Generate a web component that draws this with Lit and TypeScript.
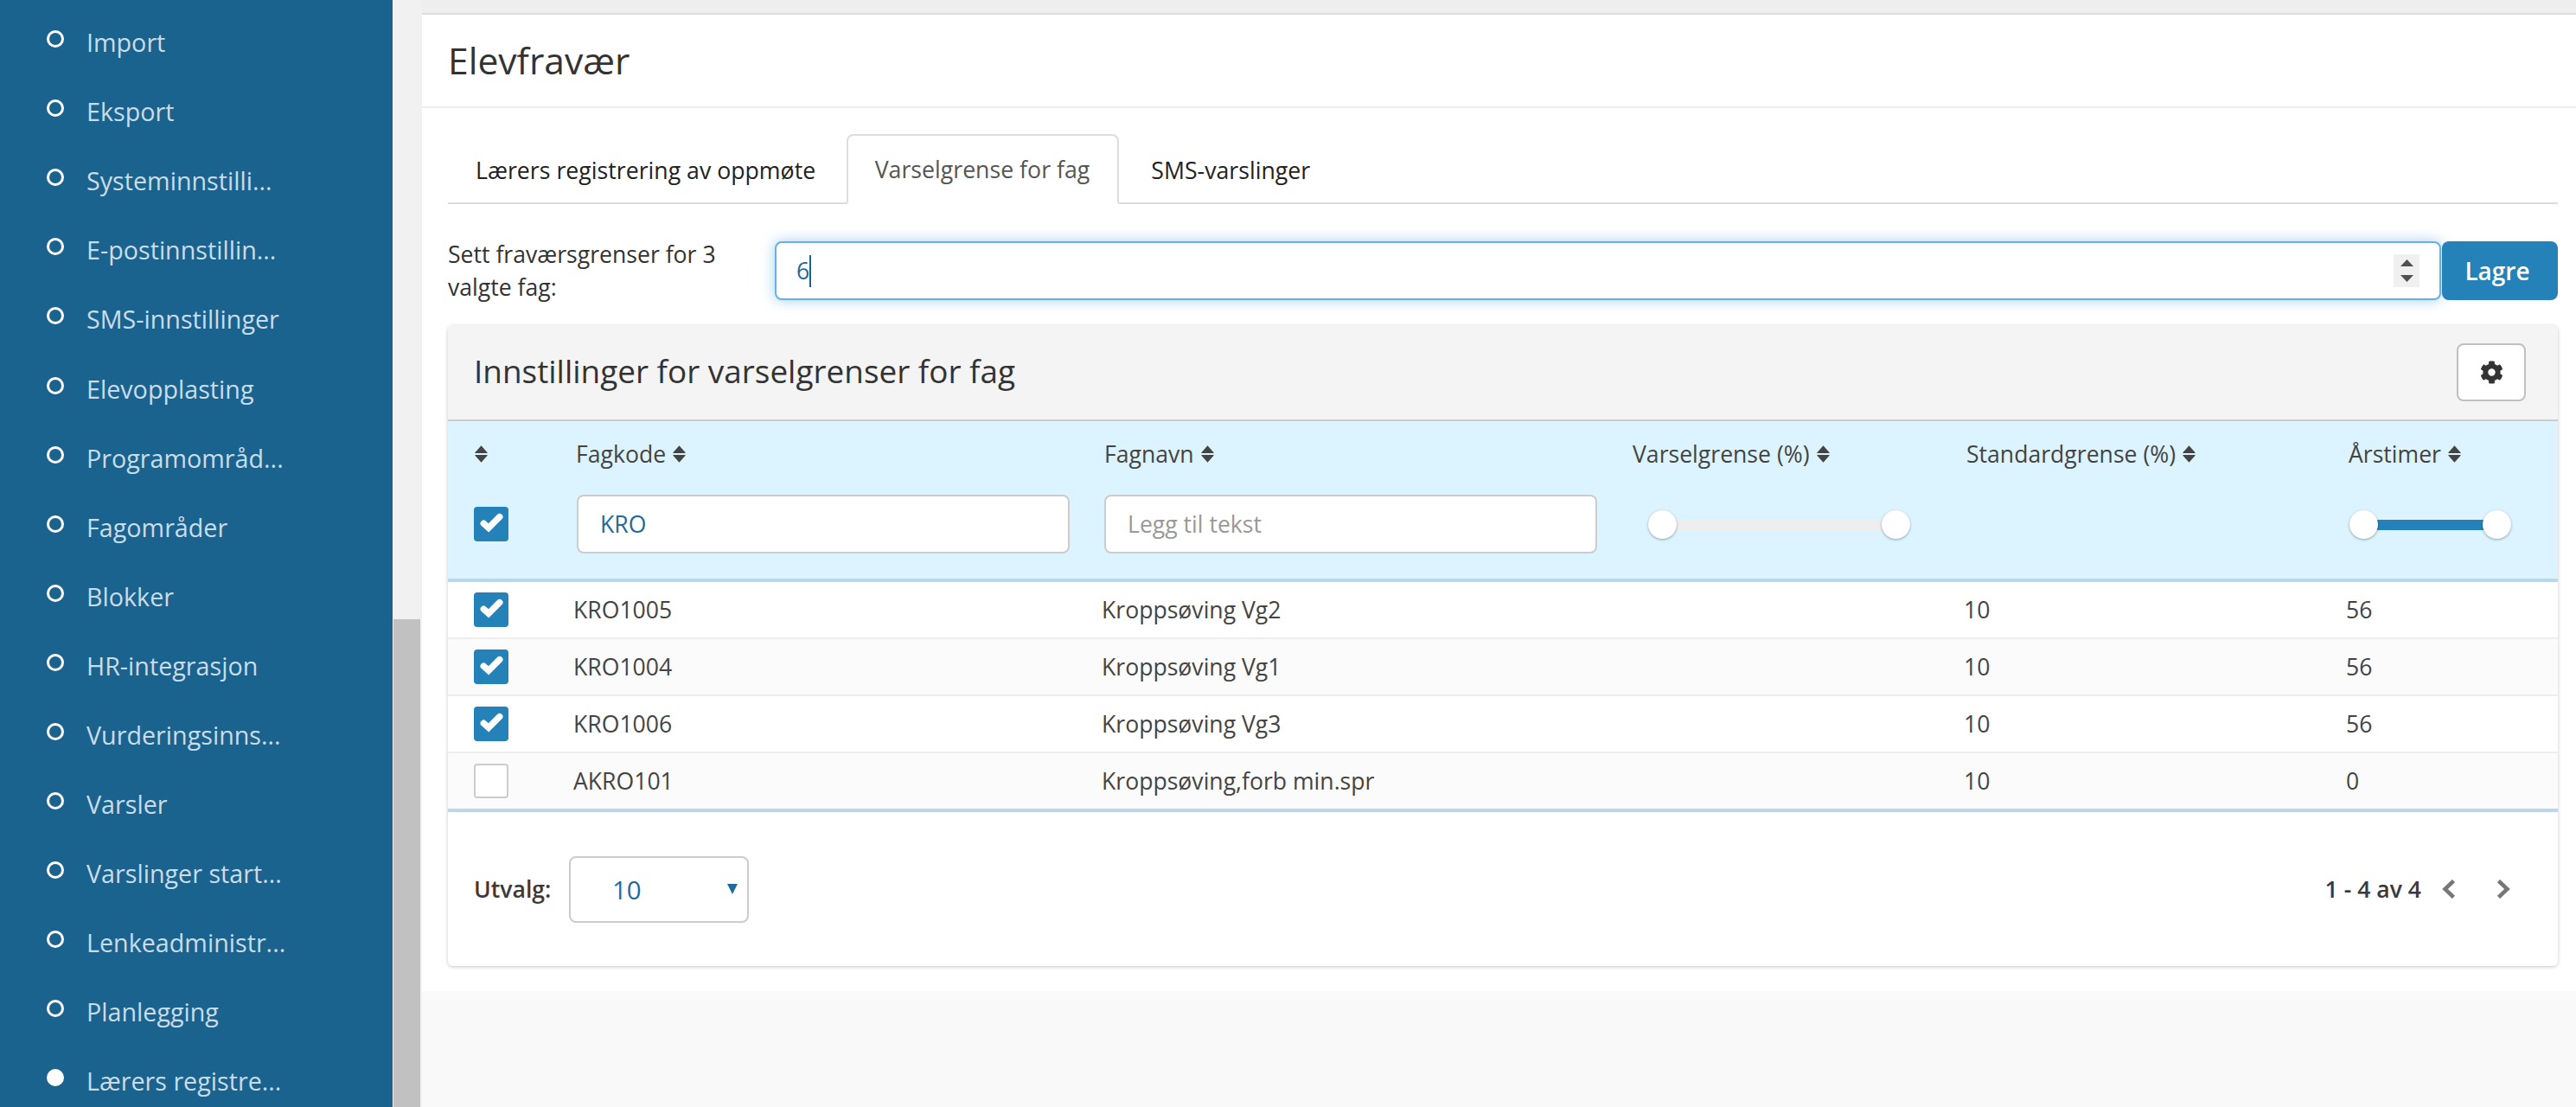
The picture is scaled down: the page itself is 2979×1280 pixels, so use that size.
import { LitElement, html, css, svg } from "lit";
import { customElement } from "lit/decorators.js";

const MENU = ["Import","Eksport","Systeminnstilli...","E-postinnstillin...","SMS-innstillinger","Elevopplasting","Programområd...","Fagområder","Blokker","HR-integrasjon","Vurderingsinns...","Varsler","Varslinger start...","Lenkeadministr...","Planlegging","Lærers registre..."];
const ROWS = [
  { c: true, code: "KRO1005", name: "Kroppsøving Vg2", std: "10", h: "56" },
  { c: true, code: "KRO1004", name: "Kroppsøving Vg1", std: "10", h: "56" },
  { c: true, code: "KRO1006", name: "Kroppsøving Vg3", std: "10", h: "56" },
  { c: false, code: "AKRO101", name: "Kroppsøving,forb min.spr", std: "10", h: "0" },
];

const sortIcon = html`<svg class="sort" viewBox="0 0 15 20"><path d="M7.5 0.3 14.6 8.2a.5.5 0 0 1-.4.8H.8a.5.5 0 0 1-.4-.8zM7.5 19.7.4 11.8a.5.5 0 0 1 .4-.8h13.4a.5.5 0 0 1 .4.8z"/></svg>`;
const checkbox = (on: boolean) => html`<span class="cb ${on ? "on" : ""}">${on ? html`<svg viewBox="0 0 40 40"><path d="M11.3 19.3 17 24.3 29.7 11.7"/></svg>` : ""}</span>`;
const gear = svg`<path d="M487.4 315.7l-42.6-24.6c4.3-23.2 4.3-47 0-70.2l42.6-24.6c4.9-2.8 7.1-8.6 5.5-14-11.1-35.6-30-67.8-54.7-94.6-3.8-4.1-10-5.1-14.8-2.3L380.8 110c-17.9-15.4-38.5-27.3-60.8-35.1V25.8c0-5.6-3.9-10.5-9.4-11.7-36.7-8.2-74.3-7.8-109.2 0-5.5 1.2-9.4 6.1-9.4 11.7V75c-22.2 7.9-42.8 19.8-60.8 35.1L88.7 85.5c-4.9-2.8-11-1.9-14.8 2.3-24.7 26.7-43.6 58.9-54.7 94.6-1.7 5.4.6 11.2 5.5 14L67.3 221c-4.3 23.2-4.3 47 0 70.2l-42.6 24.6c-4.9 2.8-7.1 8.6-5.5 14 11.1 35.6 30 67.8 54.7 94.6 3.8 4.1 10 5.1 14.8 2.3l42.6-24.6c17.9 15.4 38.5 27.3 60.8 35.1v49.2c0 5.6 3.9 10.5 9.4 11.7 36.7 8.2 74.3 7.8 109.2 0 5.5-1.2 9.4-6.1 9.4-11.7v-49.2c22.2-7.9 42.8-19.8 60.8-35.1l42.6 24.6c4.9 2.8 11 1.9 14.8-2.3 24.7-26.7 43.6-58.9 54.7-94.6 1.5-5.5-.7-11.3-5.6-14.1zM256 336c-44.1 0-80-35.9-80-80s35.9-80 80-80 80 35.9 80 80-35.9 80-80 80z"/>`;

@customElement("app-root")
export class AppRoot extends LitElement {
  static styles = css`
    :host { display: block; width: 2979px; height: 1280px; overflow: hidden; font-family: "Open Sans", sans-serif; font-size: 26.6px; line-height: 38px; color: #333; background: #f9f9f9; }
    * { box-sizing: border-box; }
    .page { display: grid; grid-template-columns: 454px 34px 1fr; height: 1280px; }

    .side { background: #1b638f; padding-top: 9px; overflow: hidden; }
    .side ul { list-style: none; margin: 0; padding: 0; }
    .side li { height: 80.1px; display: flex; align-items: center; padding-left: 54px; color: #c9dde9; white-space: nowrap; font-size: 28.7px; }
    .dot { width: 20px; height: 20px; border: 3px solid #fff; border-radius: 50%; margin-right: 26px; position: relative; top: -4px; flex: none; }
    .dot.on { background: #fff; }

    .bar { background: #f1f1f1; padding: 716px 2px 0 1px; display: flex; }
    .thumb { flex: 1; background: #c1c1c1; }

    .main { display: flex; flex-direction: column; }
    .top { height: 17px; background: #eee; border-bottom: 2px solid #ddd; }
    .sheet { background: #fff; height: 1129px; }
    .title { height: 108px; border-bottom: 2px solid #eee; padding: 0 30px 3px; display: flex; align-items: center; font-size: 42.6px; color: #333; }
    .body { padding: 30px 21px 0 30px; }

    .tabs { display: flex; height: 81px; border-bottom: 2px solid #ddd; font-size: 26.7px; }
    .tab { padding: 0 32px; height: 81px; display: flex; align-items: center; color: #222; border: 2px solid transparent; border-bottom: 0; border-radius: 8px 8px 0 0; white-space: nowrap; }
    .tab.first { padding-left: 30px; padding-right: 34px; }
    .tab.active { color: #555; background: #fff; border-color: #ddd; border-bottom: 2px solid #fff; margin-right: 3px; padding-left: 30.5px; }

    .limit { display: flex; align-items: center; margin-top: 43px; height: 68px; }
    .limit label { width: 378px; flex: none; }
    .num { flex: 1; height: 68px; background: #fff; border: 2px solid #66afe9; border-radius: 8px; box-shadow: 0 0 16px rgba(102,175,233,.6); display: flex; align-items: center; padding: 0 23px 0 23px; color: #1f6a9c; margin-right: 1px; }
    .caret { width: 2px; height: 37px; background: #1b638f; }
    .grow { flex: 1; }
    .spin { width: 30px; height: 38px; background: #f0f0f0; display: flex; flex-direction: column; align-items: center; justify-content: center; gap: 10px; }
    .spin svg { width: 15px; height: 8px; fill: #505050; display: block; }
    .save { width: 134px; height: 68px; background: #2582b8; color: #fff; font-weight: 600; font-size: 28px; border: 0; border-radius: 8px; font-family: inherit; padding: 0 6px 0 0; }

    .panel { margin-top: 29px; height: 741px; border-radius: 6px; background: #fff; box-shadow: 0 1px 4px rgba(0,0,0,.22); overflow: hidden; }
    .phead { height: 111px; background: #f4f4f4; border-bottom: 2px solid #ccc; display: flex; align-items: center; justify-content: space-between; padding: 0 37px 0 30px; font-size: 36.9px; }
    .phead > span:first-child { margin-top: -3px; }
    .gearbtn { width: 80px; height: 67px; background: #fff; border: 2px solid #c0c0c0; border-radius: 8px; display: flex; align-items: center; justify-content: center; }
    .gearbtn svg { width: 27px; height: 27px; fill: #333; }

    .grid { display: grid; grid-template-columns: 143px 611px 611px 386px 442px 247px; }
    .thead { background: #dcf4ff; border-bottom: 4px solid #bcd7eb; height: 186px; }
    .labels { height: 76px; align-items: center; color: #444; }
    .labels > div { display: flex; align-items: center; gap: 8px; padding-left: 5px; white-space: nowrap; }
    .labels > div:first-child { padding-left: 31px; }
    .sort { width: 15px; height: 20px; fill: #444; flex: none; }
    .filters { height: 68px; margin-top: 9px; align-items: center; }
    .filters > div:first-child { padding-left: 30px; display: flex; }
    .cb { width: 40px; height: 40px; border-radius: 4px; display: flex; background: #fff; border: 2px solid #ccc; }
    .cb.on { background: #2582b8; border: 0; }
    .cb svg { width: 40px; height: 40px; fill: none; stroke: #fff; stroke-width: 7.5; stroke-linejoin: miter; stroke-linecap: round; }
    input { font: inherit; height: 68px; background: #fff; border: 2px solid #ccc; border-radius: 8px; padding: 0 25px; color: #1f6a9c; display: block; outline: none; }
    input::placeholder { color: #999; opacity: 1; }
    .i1 { width: 570px; margin-left: 6px; }
    .i2 { width: 570px; margin-left: 5px; }
    .slider { position: relative; display: flex; justify-content: space-between; height: 33px; align-items: center; }
    .s1 { width: 303px; margin-left: 23px; }
    .s2 { width: 187px; margin-left: 6px; }
    .track { position: absolute; left: 16px; right: 16px; top: 11px; height: 12px; background: #eee; }
    .s2 .track { background: #2582b8; }
    .knob { position: relative; width: 33px; height: 33px; border-radius: 50%; background: #fff; box-shadow: 0 1px 3px rgba(0,0,0,.35); }

    .row { height: 66px; align-items: center; border-bottom: 2px solid #eee; color: #444; }
    .row > div { padding-left: 2px; }
    .row:nth-child(even) { background: #fbfbfb; }
    .row:last-child { border-bottom: 0; height: 64px; }
    .row > div:first-child { padding-left: 30px; display: flex; }
    .tbody { border-bottom: 4px solid #bcd7eb; }

    .foot { display: flex; align-items: center; justify-content: space-between; height: 178px; padding: 0 55px 0 30px; font-weight: 600; color: #3a3a3a; }
    .foot .l, .foot .r { display: flex; align-items: center; }
    .ulabel { width: 110px; }
    .sel { width: 208px; height: 77px; border: 2px solid #ccc; border-radius: 8px; display: flex; align-items: center; justify-content: space-between; padding: 0 11px 0 48px; color: #1f6a9c; font-weight: 400; font-size: 29.4px; }
    .sel span { position: relative; top: 1px; }
    .sel svg { width: 12px; height: 12px; fill: #1f6a9c; }
    .chev { width: 16px; height: 22px; fill: none; stroke: #777; stroke-width: 4.5; margin-left: 24px; }
    .chev + .chev { margin-left: 47px; }
  `;

  render() {
    return html`<div class="page">
      <nav class="side"><ul>${MENU.map((m, i) => html`<li><span class="dot ${i === MENU.length - 1 ? "on" : ""}"></span>${m}</li>`)}</ul></nav>
      <div class="bar"><div class="thumb"></div></div>
      <div class="main">
        <div class="top"></div>
        <div class="sheet">
          <div class="title">Elevfravær</div>
          <div class="body">
            <div class="tabs">
              <div class="tab first">Lærers registrering av oppmøte</div>
              <div class="tab active">Varselgrense for fag</div>
              <div class="tab">SMS-varslinger</div>
            </div>
            <div class="limit">
              <label>Sett fraværsgrenser for 3 valgte fag:</label>
              <div class="num"><span>6</span><span class="caret"></span><span class="grow"></span>
                <span class="spin"><svg viewBox="0 0 15 8"><path d="M7.5 0 15 8H0z"/></svg><svg viewBox="0 0 15 8"><path d="M0 0h15L7.5 8z"/></svg></span>
              </div>
              <button class="save">Lagre</button>
            </div>
            <section class="panel">
              <div class="phead"><span>Innstillinger for varselgrenser for fag</span>
                <span class="gearbtn"><svg viewBox="0 0 512 512">${gear}</svg></span></div>
              <div class="thead">
                <div class="grid labels">
                  <div>${sortIcon}</div>
                  <div>Fagkode${sortIcon}</div>
                  <div>Fagnavn${sortIcon}</div>
                  <div>Varselgrense (%)${sortIcon}</div>
                  <div>Standardgrense (%)${sortIcon}</div>
                  <div>Årstimer${sortIcon}</div>
                </div>
                <div class="grid filters">
                  <div>${checkbox(true)}</div>
                  <div><input class="i1" value="KRO" /></div>
                  <div><input class="i2" placeholder="Legg til tekst" /></div>
                  <div><div class="slider s1"><span class="track"></span><span class="knob"></span><span class="knob"></span></div></div>
                  <div></div>
                  <div><div class="slider s2"><span class="track"></span><span class="knob"></span><span class="knob"></span></div></div>
                </div>
              </div>
              <div class="tbody">
                ${ROWS.map((r) => html`<div class="grid row">
                  <div>${checkbox(r.c)}</div><div>${r.code}</div><div>${r.name}</div><div></div><div>${r.std}</div><div>${r.h}</div>
                </div>`)}
              </div>
              <div class="foot">
                <div class="l"><span class="ulabel">Utvalg:</span><div class="sel"><span>10</span><svg viewBox="0 0 12 12"><path d="M0 0h12L6 12z"/></svg></div></div>
                <div class="r">1 - 4 av 4
                  <svg class="chev" viewBox="0 0 16 22"><path d="M13.5 1.5 3.5 11l10 9.5"/></svg>
                  <svg class="chev" viewBox="0 0 16 22"><path d="M2.5 1.5l10 9.5-10 9.5"/></svg>
                </div>
              </div>
            </section>
          </div>
        </div>
      </div>
    </div>`;
  }
}
